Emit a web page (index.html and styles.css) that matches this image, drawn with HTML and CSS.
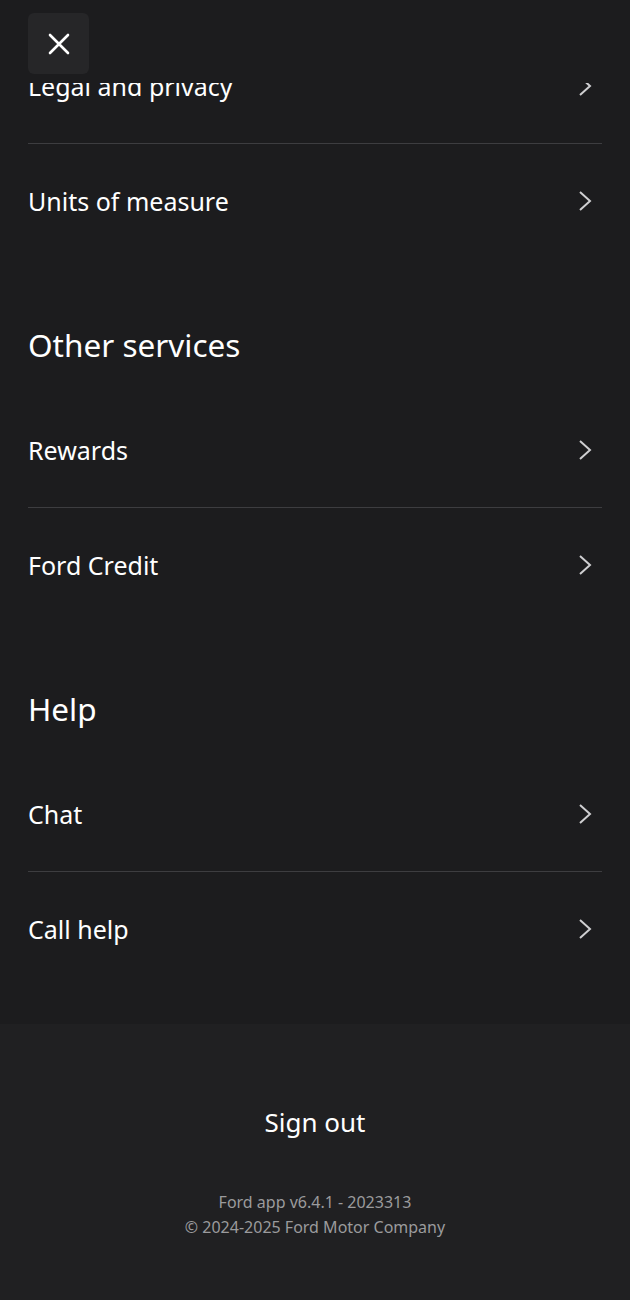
FILE: index.html
```html
<!DOCTYPE html>
<html lang="en">
    <head>
        <meta charset="UTF-8">
        <meta name="viewport" content="width=device-width, initial-scale=1.0">
        <title>Ford - Settings</title>
        <link rel="stylesheet" href="styles.css">
    </head>
    <body>
        <div class="page">
            <div class="top-bar">
                <button class="close-btn" aria-label="Close">
                    <svg width="22" height="22" viewBox="0 0 22 22">
                        <path d="M2 2 L20 20 M20 2 L2 20" stroke="#fff" stroke-width="2.6" stroke-linecap="round"/>
                    </svg>
                </button>
            </div>

            <div class="scroll">
                <div class="list">
                    <a class="row row-cut">
                        <span>Legal and privacy</span>
                        <svg class="chev" viewBox="0 0 14 22"><path d="M2 2 L12 11 L2 20"/></svg>
                    </a>
                    <a class="row">
                        <span>Units of measure</span>
                        <svg class="chev" viewBox="0 0 14 22"><path d="M2 2 L12 11 L2 20"/></svg>
                    </a>
                </div>

                <h2 class="section-title">Other services</h2>
                <div class="list">
                    <a class="row">
                        <span>Rewards</span>
                        <svg class="chev" viewBox="0 0 14 22"><path d="M2 2 L12 11 L2 20"/></svg>
                    </a>
                    <a class="row">
                        <span>Ford Credit</span>
                        <svg class="chev" viewBox="0 0 14 22"><path d="M2 2 L12 11 L2 20"/></svg>
                    </a>
                </div>

                <h2 class="section-title">Help</h2>
                <div class="list">
                    <a class="row">
                        <span>Chat</span>
                        <svg class="chev" viewBox="0 0 14 22"><path d="M2 2 L12 11 L2 20"/></svg>
                    </a>
                    <a class="row">
                        <span>Call help</span>
                        <svg class="chev" viewBox="0 0 14 22"><path d="M2 2 L12 11 L2 20"/></svg>
                    </a>
                </div>
            </div>

            <div class="footer">
                <button class="sign-out">Sign out</button>
                <div class="version">
                    <span>Ford app v6.4.1 - 2023313</span>
                    <span>&copy; 2024-2025 Ford Motor Company</span>
                </div>
            </div>
        </div>
    </body>
</html>
```

FILE: styles.css
```css
*{
    box-sizing: border-box;
}
body{
    margin: 0;
    background-color: #1c1c1e;
    font-family: "Noto Sans", "Open Sans", sans-serif;
    color: #fff;
}
.page{
    width: 630px;
    min-height: 1300px;
    display: flex;
    flex-direction: column;
}
.top-bar{
    height: 83px;
    padding: 13px 28px 0;
    background-color: #1c1c1e;
}
.close-btn{
    width: 61px;
    height: 61px;
    border: none;
    border-radius: 6px;
    background-color: #262628;
    display: flex;
    align-items: center;
    justify-content: center;
    padding: 0;
}
.scroll{
    overflow: hidden;
    padding: 0 28px 38px;
}
.list{
    display: flex;
    flex-direction: column;
}
.row{
    height: 114px;
    display: flex;
    align-items: center;
    justify-content: space-between;
    font-size: 25px;
    color: #fff;
    padding-right: 10px;
}
.row + .row{
    border-top: 1px solid #3d3d40;
    height: 115px;
}
.row-cut{
    margin-top: -54px;
}
.chev{
    width: 14px;
    height: 22px;
    fill: none;
    stroke: #cfcfd1;
    stroke-width: 2;
}
.section-title{
    margin: 0;
    height: 135px;
    padding-top: 67px;
    font-size: 31.5px;
    font-weight: 400;
    line-height: 40px;
}
.footer{
    flex: 1;
    background-color: #202022;
    display: flex;
    flex-direction: column;
    align-items: center;
    padding-top: 79px;
}
.sign-out{
    background: none;
    border: none;
    color: #fff;
    font-family: inherit;
    font-size: 26px;
    line-height: 38px;
    padding: 0;
}
.version{
    margin-top: 49px;
    display: flex;
    flex-direction: column;
    align-items: center;
    font-size: 16px;
    line-height: 25px;
    color: #9b9b9d;
}
```
